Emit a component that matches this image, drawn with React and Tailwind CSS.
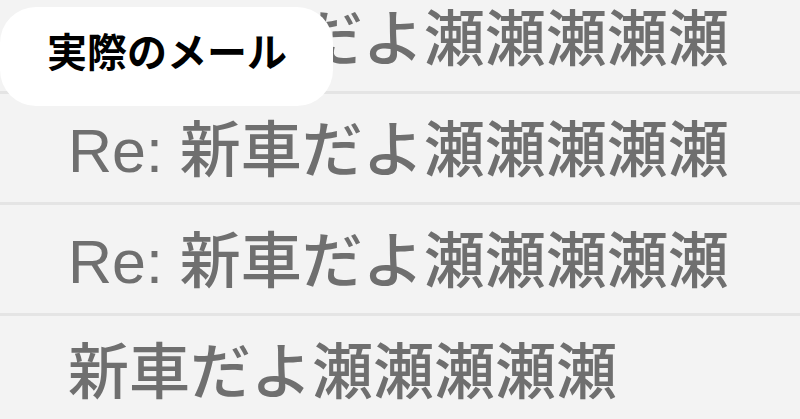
import React from 'react'

const rows = [
    'Re: 新車だよ瀬瀬瀬瀬瀬',
    'Re: 新車だよ瀬瀬瀬瀬瀬',
    'Re: 新車だよ瀬瀬瀬瀬瀬',
    '新車だよ瀬瀬瀬瀬瀬'
]

const App = () => {
    return (
        <div
            className="relative h-[419px] w-[800px] overflow-hidden bg-[#f2f2f2]"
            style={{ fontFamily: '"Liberation Sans", "Noto Sans CJK JP", sans-serif' }}
        >
            {/* Mail list */}
            <div className="-mt-[17px] flex flex-col">
                {rows.map((subject, i) => (
                    <div
                        key={i}
                        className="flex h-[111px] shrink-0 items-center border-b-[3px] border-[#e4e4e4] bg-[#f3f3f3] pl-[68px] pt-[6px]"
                    >
                        <span className="whitespace-nowrap text-[61px] font-medium leading-none text-[#6f6f6f]">
                            {subject}
                        </span>
                    </div>
                ))}
            </div>

            {/* Label */}
            <div className="absolute left-0 top-[7px] flex h-[99px] w-[333px] items-start rounded-[36px] bg-white pl-[47px] pt-[23px]">
                <span className="whitespace-nowrap font-['Noto_Sans_CJK_JP',sans-serif] text-[40px] font-bold leading-none text-black">
                    実際のメール
                </span>
            </div>
        </div>
    )
}

export default App
